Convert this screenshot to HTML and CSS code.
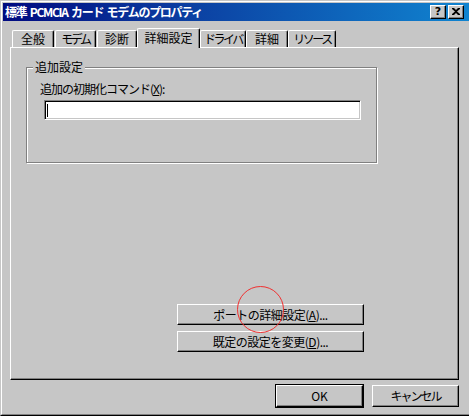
FILE: index.html
```html
<!DOCTYPE html>
<html lang="ja">
<head>
<meta charset="utf-8">
<title>標準 PCMCIA カード モデムのプロパティ</title>
<link rel="stylesheet" href="styles.css">
</head>
<body>
<div class="window">
  <div class="frame">
    <div class="titlebar">
      <span class="title">標準 PCMCIA カード モデムのプロパティ</span>
      <div class="caption-buttons">
        <span class="cbtn cbtn-help">?</span>
        <span class="cbtn cbtn-close">
          <svg width="8" height="7" viewBox="0 0 8 7"><path d="M0 0h2l2 2 2-2h2v1L5 3.5 8 6v1H6L4 5 2 7H0V6l3-2.5L0 1z" fill="#000"/></svg>
        </span>
      </div>
    </div>
    <div class="content">
      <div class="tabs">
        <div class="tab tab-1">全般</div>
        <div class="tab tab-2 tab-kana">モデム</div>
        <div class="tab tab-3">診断</div>
        <div class="tab tab-4 tab-active">詳細設定</div>
        <div class="tab tab-5 tab-kana">ドライバ</div>
        <div class="tab tab-6">詳細</div>
        <div class="tab tab-7 tab-kana">リソース</div>
      </div>
      <div class="panel">
        <div class="group">
          <span class="group-label">追加設定</span>
          <div class="field-label">追加の初期化コマンド(<u>X</u>):</div>
          <div class="edit"><span class="caret"></span></div>
        </div>
        <div class="panel-buttons">
          <div class="btn btn-wide">ポートの詳細設定(<u>A</u>)...</div>
          <div class="btn btn-wide">既定の設定を変更(<u>D</u>)...</div>
        </div>
      </div>
      <div class="dialog-buttons">
        <div class="btn btn-dialog btn-default">OK</div>
        <div class="btn btn-dialog btn-cancel">キャンセル</div>
      </div>
    </div>
  </div>
  <div class="annotation-circle"></div>
</div>
</body>
</html>
```
FILE: styles.css
```css
html, body {
  margin: 0;
  padding: 0;
  background: #c6c6c6;
  overflow: hidden;
}
body {
  font-family: "Noto Sans CJK JP", "Noto Sans", sans-serif;
  font-size: 12px;
  line-height: 14px;
  color: #000;
  letter-spacing: -0.5px;
}
.window {
  position: relative;
  width: 469px;
  height: 416px;
  box-sizing: border-box;
  border-top: 1px solid #c6c6c6;
  border-left: 1px solid #c6c6c6;
  border-bottom: 1px solid #000;
  background: #c6c6c6;
}
.frame {
  height: 414px;
  box-sizing: border-box;
  border-top: 1px solid #fff;
  border-left: 1px solid #fff;
  border-bottom: 1px solid #808080;
  padding: 1px 0 0 1px;
}
.titlebar {
  height: 18px;
  display: flex;
  align-items: center;
  justify-content: space-between;
  background: linear-gradient(to right, #000a80 0%, #0b3a9e 35%, #1084d0 100%);
  padding-left: 2px;
}
.title {
  color: #fff;
  font-weight: bold;
  font-size: 12px;
  line-height: 14px;
  letter-spacing: -1.3px;
  word-spacing: 2px;
  white-space: nowrap;
}
.caption-buttons {
  display: flex;
  gap: 2px;
  margin-right: 5px;
}
.cbtn {
  width: 16px;
  height: 14px;
  box-sizing: border-box;
  background: #c6c6c6;
  border-top: 1px solid #fff;
  border-left: 1px solid #fff;
  border-right: 1px solid #000;
  border-bottom: 1px solid #000;
  box-shadow: inset -1px -1px 0 #808080;
  display: flex;
  align-items: center;
  justify-content: center;
  letter-spacing: 0;
}
.cbtn-help {
  font-family: "DejaVu Sans", sans-serif;
  font-weight: bold;
  font-size: 11px;
  line-height: 12px;
  padding-bottom: 1px;
}
.cbtn-close svg {
  display: block;
  margin-bottom: 1px;
}
.content {
  padding: 7px 0 7px 7px;
}
.tabs {
  display: flex;
  align-items: flex-end;
  height: 20px;
  padding-left: 2px;
  margin-bottom: -1px;
  position: relative;
  z-index: 1;
}
.tab {
  height: 17px;
  box-sizing: border-box;
  margin-bottom: 1px;
  border-top: 1px solid #fff;
  border-left: 1px solid #fff;
  border-right: 1px solid #000;
  border-radius: 2px 2px 0 0;
  box-shadow: inset -1px 0 0 #808080;
  background: #c6c6c6;
  display: flex;
  justify-content: center;
  padding-top: 1px;
  white-space: nowrap;
  letter-spacing: 0;
}
.tab-kana {
  letter-spacing: -2.5px;
}
.tab-1 { width: 42px; margin-right: 1px; }
.tab-2 { width: 41px; margin-right: 1px; }
.tab-3 { width: 40px; }
.tab-4 { width: 63px; }
.tab-5 { width: 46px; }
.tab-6 { width: 42px; }
.tab-7 { width: 48px; }
.tab-active {
  height: 20px;
  margin-bottom: 0;
  padding-top: 2px;
}
.panel {
  width: 449px;
  height: 333px;
  box-sizing: border-box;
  border-top: 1px solid #fff;
  border-left: 1px solid #fff;
  border-right: 1px solid #000;
  border-bottom: 1px solid #000;
  box-shadow: inset -1px -1px 0 #808080;
  padding-top: 19px;
  padding-left: 15px;
}
.group {
  position: relative;
  width: 351px;
  height: 96px;
  box-sizing: border-box;
  border: 1px solid #808080;
  box-shadow: inset 1px 1px 0 #fff, 1px 1px 0 #fff;
  padding: 14px 0 0 13px;
}
.group-label {
  position: absolute;
  top: -8px;
  left: 6px;
  padding: 0 2px;
  background: #c6c6c6;
  line-height: 14px;
  letter-spacing: 0;
}
.field-label {
  white-space: nowrap;
  letter-spacing: -1px;
}
.edit {
  width: 317px;
  height: 20px;
  box-sizing: border-box;
  margin: 4px 0 0 4px;
  background: #fff;
  border-top: 1px solid #808080;
  border-left: 1px solid #808080;
  border-right: 1px solid #fff;
  border-bottom: 1px solid #fff;
  box-shadow: inset 1px 1px 0 #000, inset -1px -1px 0 #c6c6c6;
  padding: 3px 0 0 2px;
}
.caret {
  display: block;
  width: 1px;
  height: 13px;
  background: #000;
}
.panel-buttons {
  display: flex;
  flex-direction: column;
  gap: 6px;
  margin: 141px 0 0 151px;
}
.btn {
  box-sizing: border-box;
  height: 21px;
  background: #c6c6c6;
  border-top: 1px solid #fff;
  border-left: 1px solid #fff;
  border-right: 1px solid #000;
  border-bottom: 1px solid #000;
  box-shadow: inset -1px -1px 0 #808080;
  display: flex;
  align-items: center;
  justify-content: center;
  white-space: nowrap;
}
.btn-wide {
  width: 187px;
}
.dialog-buttons {
  display: flex;
  justify-content: flex-end;
  gap: 9px;
  width: 449px;
  margin-top: 5px;
}
.btn-dialog {
  width: 87px;
  height: 22px;
}
.btn-default {
  box-shadow: inset -1px -1px 0 #808080, 0 0 0 1px #000;
  letter-spacing: 0;
}
.btn-cancel {
  letter-spacing: -2px;
}
.annotation-circle {
  position: absolute;
  left: 236px;
  top: 285px;
  width: 47px;
  height: 47px;
  box-sizing: border-box;
  border: 1.5px solid #f03030;
  border-radius: 50%;
}
```
